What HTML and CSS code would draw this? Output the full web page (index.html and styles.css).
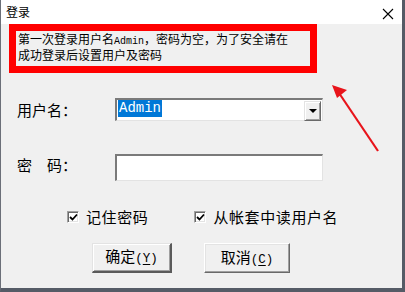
FILE: index.html
```html
<!DOCTYPE html>
<html lang="zh-CN">
<head>
<meta charset="utf-8">
<title>登录</title>
<link rel="stylesheet" href="styles.css">
</head>
<body>
<div class="window">
  <div class="titlebar">
    <span class="title">登录</span>
    <svg class="close" width="12" height="12" viewBox="0 0 12 12"><path d="M1 1 L11 11 M11 1 L1 11" stroke="#000" stroke-width="1.1" fill="none"/></svg>
  </div>
  <div class="content">
    <div class="notice">
      <p>第一次登录用户名<span class="mono-s">Admin</span>，密码为空，为了安全请在</p>
      <p>成功登录后设置用户及密码</p>
    </div>
    <div class="row row-user">
      <span class="label">用户名：</span>
      <div class="combo">
        <span class="sel">Admin</span>
        <span class="drop"><span class="tri"></span></span>
      </div>
    </div>
    <div class="row row-pass">
      <span class="label">密　码：</span>
      <div class="pass"></div>
    </div>
    <div class="checks">
      <label class="check c1"><span class="box"><svg width="9" height="9" viewBox="0 0 9 9"><path d="M1 4 L3.5 6.5 L8 1.5" stroke="#000" stroke-width="1.8" fill="none"/></svg></span>记住密码</label>
      <label class="check c2"><span class="box"><svg width="9" height="9" viewBox="0 0 9 9"><path d="M1 4 L3.5 6.5 L8 1.5" stroke="#000" stroke-width="1.8" fill="none"/></svg></span>从帐套中读用户名</label>
    </div>
    <div class="buttons">
      <button class="btn ok">确定<span class="mono">(<u>Y</u>)</span></button>
      <button class="btn cancel">取消<span class="mono">(<u>C</u>)</span></button>
    </div>
  </div>
  <svg class="arrow" width="405" height="292" viewBox="0 0 405 292">
    <line x1="378" y1="151" x2="339" y2="93" stroke="#e8141b" stroke-width="2.2"/>
    <polygon points="332,85 347,90 337,98" fill="#e8141b"/>
  </svg>
</div>
</body>
</html>
```
FILE: styles.css
```css
html, body {
  margin: 0;
  padding: 0;
  background: #f0f0f0;
}
body {
  font-family: "Noto Sans CJK SC", "Liberation Sans", sans-serif;
  color: #000;
}
.window {
  position: relative;
  width: 405px;
  height: 292px;
  box-sizing: border-box;
  border-left: 1px solid #6b6f78;
  border-right: 3px solid #555b66;
  border-bottom: 4px solid #555b66;
  background: #f0f0f0;
  overflow: hidden;
}
.titlebar {
  height: 24px;
  background: #fff;
  display: flex;
  align-items: center;
  justify-content: space-between;
  padding: 0 8px 0 5px;
}
.title {
  font-size: 12px;
  line-height: 14px;
  margin-top: -1px;
}
.close {
  display: block;
  margin-top: 3px;
}
.content {
  display: flex;
  flex-direction: column;
}
.notice {
  margin-left: 8px;
  width: 308px;
  height: 49px;
  box-sizing: border-box;
  border: 7px solid #ff0000;
  padding: 1px 0 0 2px;
}
.notice p {
  margin: 0;
  font-size: 12px;
  line-height: 13px;
  white-space: nowrap;
}
.mono-s {
  font-family: "Liberation Mono", monospace;
  font-size: 10px;
}
.row {
  display: flex;
  align-items: center;
  margin-left: 16px;
}
.label {
  width: 98px;
  font-size: 15px;
  line-height: 16px;
}
.row-user {
  margin-top: 25px;
  height: 23px;
}
.row-pass {
  margin-top: 33px;
  height: 27px;
}
.row-pass .label {
  margin-top: -6px;
}
.combo {
  width: 208px;
  height: 23px;
  box-sizing: border-box;
  background: #fff;
  border-top: 2px solid #7a7a7a;
  border-left: 2px solid #7a7a7a;
  border-right: 1px solid #e3e3e3;
  border-bottom: 1px solid #e3e3e3;
  display: flex;
  align-items: center;
  justify-content: space-between;
  padding: 0 1px 0 1px;
}
.sel {
  background: #0078d7;
  color: #fff;
  font-family: "Liberation Mono", monospace;
  font-size: 14px;
  line-height: 17px;
  height: 17px;
  padding: 0 1px;
  align-self: flex-start;
  margin-top: 0;
}
.drop {
  width: 17px;
  height: 20px;
  box-sizing: border-box;
  background: #f0f0f0;
  border-top: 1px solid #e3e3e3;
  border-left: 1px solid #e3e3e3;
  border-right: 1px solid #696969;
  border-bottom: 1px solid #696969;
  box-shadow: inset 1px 1px 0 #fff, inset -1px -1px 0 #a0a0a0;
  display: flex;
  align-items: center;
  justify-content: center;
  margin-top: 1px;
}
.tri {
  width: 0;
  height: 0;
  border-left: 4px solid transparent;
  border-right: 4px solid transparent;
  border-top: 4px solid #000;
}
.pass {
  width: 208px;
  height: 27px;
  box-sizing: border-box;
  background: #fff;
  border-top: 2px solid #7a7a7a;
  border-left: 2px solid #7a7a7a;
  border-right: 1px solid #e3e3e3;
  border-bottom: 1px solid #e3e3e3;
}
.checks {
  display: flex;
  align-items: center;
  margin-top: 28px;
  height: 16px;
  font-size: 15px;
  line-height: 16px;
}
.check {
  display: flex;
  align-items: center;
  letter-spacing: 0.6px;
}
.c1 {
  margin-left: 66px;
}
.c2 {
  margin-left: 46px;
}
.box {
  width: 12px;
  height: 12px;
  box-sizing: border-box;
  background: #fff;
  border-top: 1px solid #a0a0a0;
  border-left: 1px solid #a0a0a0;
  border-right: 1px solid #fff;
  border-bottom: 1px solid #fff;
  box-shadow: inset 1px 1px 0 #696969, inset -1px -1px 0 #e3e3e3;
  display: flex;
  align-items: center;
  justify-content: center;
  margin-right: 7px;
}
.box svg {
  display: block;
}
.buttons {
  display: flex;
  margin-top: 18px;
  margin-left: 91px;
}
.btn {
  font-family: "Noto Sans CJK SC", sans-serif;
  font-size: 15px;
  line-height: 16px;
  height: 30px;
  box-sizing: border-box;
  background: #f0f0f0;
  color: #000;
  padding: 0;
  margin: 0;
  border-top: 1px solid #fff;
  border-left: 1px solid #fff;
  border-right: 1px solid #696969;
  border-bottom: 1px solid #696969;
  box-shadow: inset -1px -1px 0 #a0a0a0, inset 1px 1px 0 #e3e3e3;
}
.ok {
  width: 80px;
  border-top: 1px solid #e3e3e3;
  border-left: 1px solid #e3e3e3;
  border-right: 2px solid #5a5a5a;
  border-bottom: 2px solid #5a5a5a;
  box-shadow: inset 1px 1px 0 #fff, inset -1px -1px 0 #a0a0a0;
}
.cancel {
  width: 86px;
  margin-left: 32px;
}
.mono {
  font-family: "Liberation Mono", monospace;
  font-size: 12.5px;
}
.mono u {
  text-underline-offset: 2px;
}
.arrow {
  position: absolute;
  left: -1px;
  top: 0;
  pointer-events: none;
}
```
